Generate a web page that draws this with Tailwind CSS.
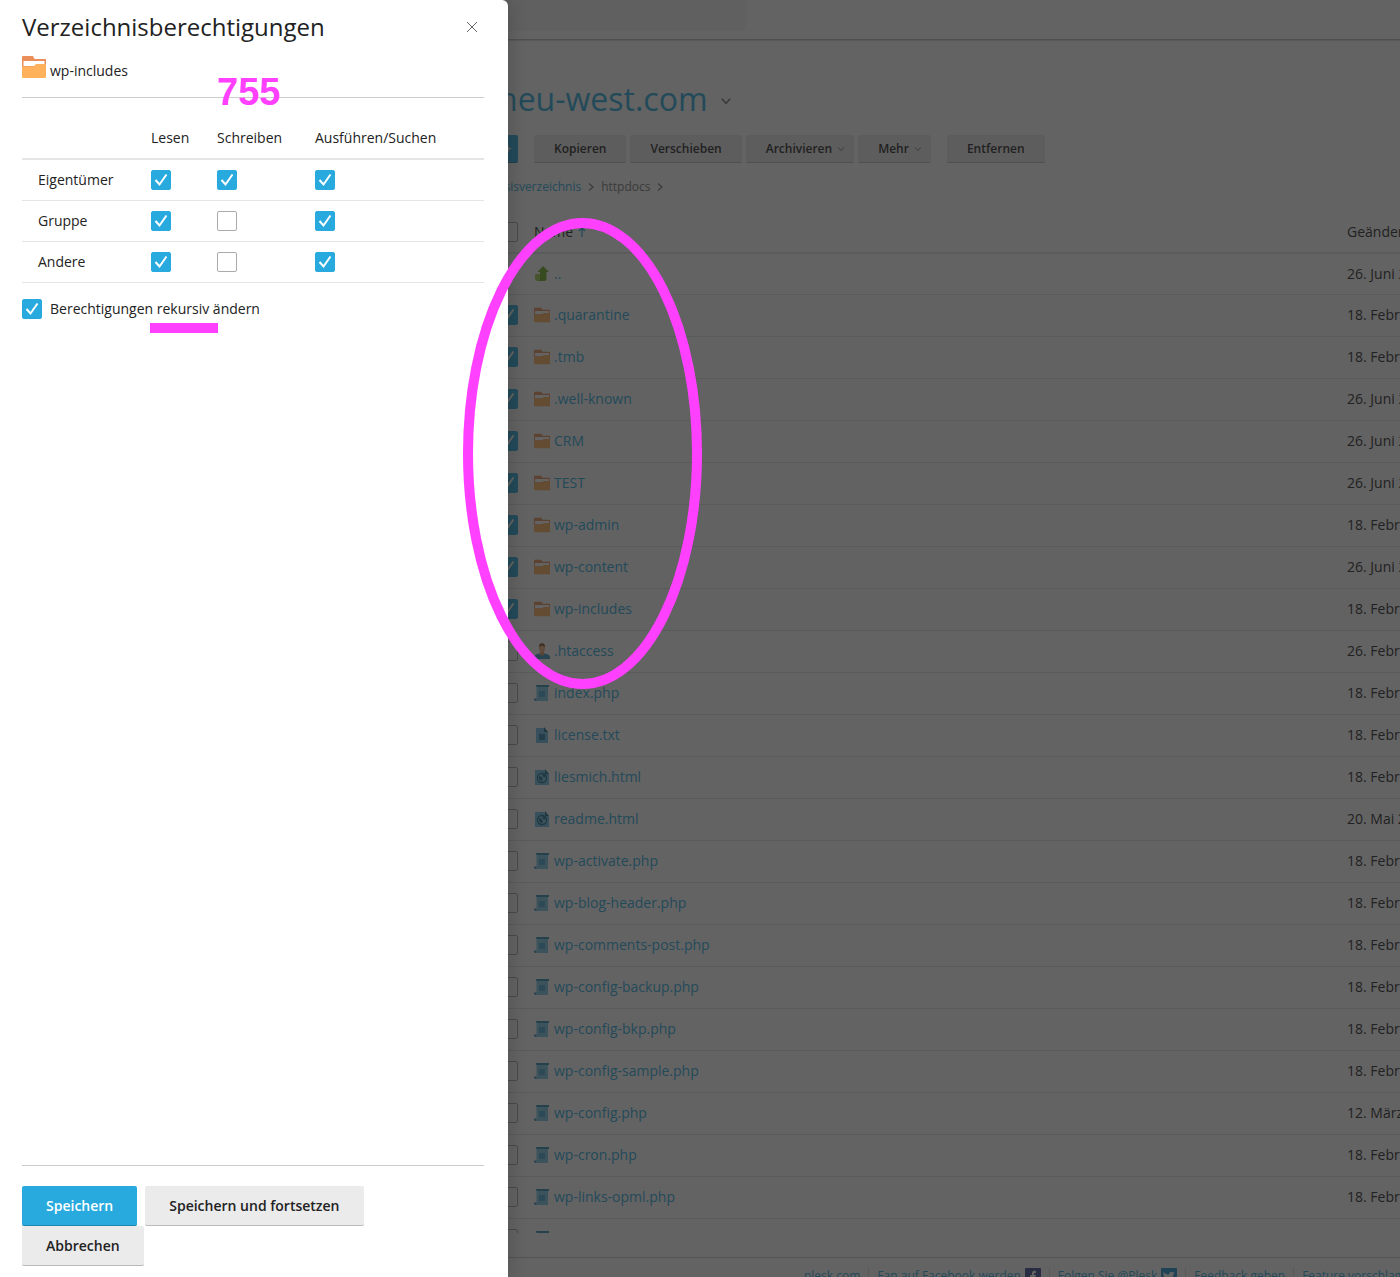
<!DOCTYPE html>
<html lang="de">
<head>
<meta charset="utf-8">
<meta name="viewport" content="width=device-width, initial-scale=1">
<title>Verzeichnisberechtigungen</title>
<script src="https://cdn.jsdelivr.net/npm/@tailwindcss/browser@4"></script>
</head>
<body class="relative h-screen overflow-hidden bg-white font-['Open_Sans',sans-serif] text-sm text-[#222]">

<svg class="hidden" aria-hidden="true">
  <symbol id="folder" viewBox="0 0 24 22">
    <path d="M1 0h10l1.500 3H24v9H0V1a1 1 0 0 1 1-1z" fill="#ea8f5a"/>
    <path d="M1.500 5h21v5h-21z" fill="#fff"/>
    <path d="M0 10.500h11.500l2.500-2.500h10v13a1 1 0 0 1-1 1H1a1 1 0 0 1-1-1z" fill="#ffb15c"/>
  </symbol>
  <symbol id="up" viewBox="0 0 16 16">
    <path d="M1 8h5v7H3a2 2 0 0 1-2-2z" fill="#9fd04c"/>
    <path d="M9 0l6 6h-2.500v6.500A2.500 2.500 0 0 1 10 15H3.500C5 15 6 14 6 12V6H3.500z" fill="#6fae1e"/>
  </symbol>
  <symbol id="user" viewBox="0 0 16 16">
    <path d="M0 16v-1.500C0 12 3 11 6 10.500h4c3 .5 6 1.500 6 4V16z" fill="#3a94c4"/>
    <path d="M6 8h4v3.500l-2 1.500-2-1.500z" fill="#d99a6c"/>
    <path d="M5 3c0-4 6-4 6 0v3c0 4-6 4-6 0z" fill="#f0b384"/>
    <path d="M5 4c-.5-5 6.500-5 6 0-1-1.500-5-1.500-6 0z" fill="#8a5a3c"/>
  </symbol>
  <symbol id="script" viewBox="0 0 16 16">
    <path d="M2.500 2h11.500v14H2.500z" fill="#7cc8e8"/>
    <path d="M2 0h13v2H3C2.500 2 2 1.500 2 0zM0 13.500h2.500V16H1.500C.5 16 0 15 0 13.500z" fill="#2f8cb3"/>
    <path d="M5 6h6v6H5z" fill="#4ba9d0"/>
  </symbol>
  <symbol id="text" viewBox="0 0 16 16">
    <path d="M2 1h8l4 4v11H2z" fill="#6cc0e4"/>
    <path d="M10 0l4 5h-4z" fill="#1f6f92"/>
    <path d="M5 7h6v6H5z" fill="#2784ad"/>
  </symbol>
  <symbol id="html" viewBox="0 0 16 16">
    <path d="M1 1h10l4 4v11H1z" fill="#6cc0e4"/>
    <path d="M11 0l4 5h-4z" fill="#1f6f92"/>
    <circle cx="8" cy="9" r="4.500" fill="#8ad0ee" stroke="#1f6f92" stroke-width="1.400"/>
    <path d="M5 7l3 1 1 3-2 1-2-2zM8 5l3 1v3l-2-1z" fill="#1f6f92"/>
  </symbol>
  <symbol id="check" viewBox="0 0 20 20">
    <path d="M4.500 10l4 4.500L15.500 4.500" fill="none" stroke="#fff" stroke-width="2"/>
  </symbol>
  <symbol id="chevron" viewBox="0 0 10 10">
    <path d="M1.500 3L5 7l3.500-4" fill="none" stroke="currentColor" stroke-width="1.200"/>
  </symbol>
</svg>

<div class="flex h-full flex-col">
  <header class="h-10 shrink-0 border-b border-[#bbb] shadow-[0_1px_1px_#ddd]">
    <div class="h-[31px] w-[746px] rounded-br bg-[#f5f5f5]"></div>
  </header>

  <main class="flex min-h-0 flex-1 flex-col pl-[498px]">
    <div class="mt-[35px] flex h-12 items-center gap-3">
      <h1 class="text-[32px] leading-12 text-[#28aade]">neu-west.com</h1>
      <svg class="mt-1 size-3 text-[#666]"><use href="#chevron"/></svg>
    </div>

    <div class="mt-3 flex gap-1 text-xs font-semibold">
      <button class="mr-3 h-7 w-5 rounded-r-xs border-b border-[#1c86b3] bg-[#28aade] text-white">+</button>
      <button class="h-7 rounded-xs border-b border-[#bbb] bg-[#ebebeb] px-5">Kopieren</button>
      <button class="h-7 rounded-xs border-b border-[#bbb] bg-[#ebebeb] px-5">Verschieben</button>
      <button class="flex h-7 items-center gap-[5px] rounded-xs border-b border-[#bbb] bg-[#ebebeb] pr-[9px] pl-5">Archivieren <svg class="size-2 text-[#777]"><use href="#chevron"/></svg></button>
      <button class="mr-3 flex h-7 items-center gap-[5px] rounded-xs border-b border-[#bbb] bg-[#ebebeb] pr-[9px] pl-5">Mehr <svg class="size-2 text-[#777]"><use href="#chevron"/></svg></button>
      <button class="h-7 rounded-xs border-b border-[#bbb] bg-[#ebebeb] px-5">Entfernen</button>
    </div>

    <nav class="mt-4 -ml-2 flex h-4 items-center gap-[5px] text-xs text-[#777]">
      <a href="#" class="text-[#28aade]">Basisverzeichnis</a>
      <svg class="size-2.5 -rotate-90"><use href="#chevron"/></svg>
      <span>httpdocs</span>
      <svg class="size-2.5 -rotate-90"><use href="#chevron"/></svg>
    </nav>

    <div class="mt-4 min-h-0 flex-1 overflow-hidden">
      <table class="w-full table-fixed border-collapse text-left">
        <colgroup><col class="w-9"><col><col class="w-[53px]"></colgroup>
        <thead>
          <tr class="h-[42px] border-b-2 border-[#e5e5e5]">
            <th><input type="checkbox" aria-label="Alle auswählen" class="block size-5 appearance-none rounded-xs border border-[#aaa]"></th>
            <th class="font-normal"><button class="flex items-center gap-1">Name <svg class="size-2.5" viewBox="0 0 10 10"><path d="M5 10V1M2 4l3-3 3 3" fill="none" stroke="#28aade" stroke-width="1.300"/></svg></button></th>
            <th class="overflow-hidden font-normal whitespace-nowrap">Geändert</th>
          </tr>
        </thead>
        <tbody id="files"></tbody>
      </table>
    </div>
  </main>

  <footer class="mt-6 flex h-5 shrink-0 gap-2 overflow-hidden border-t border-[#ccc] pt-2.5 pl-[804px] text-xs leading-4 whitespace-nowrap text-[#28aade]">
    <a href="#">plesk.com</a>
    <span class="w-px shrink-0 bg-[#ddd]"></span>
    <a href="#" class="flex gap-1">Fan auf Facebook werden <svg class="size-4" viewBox="0 0 16 16"><rect width="16" height="16" rx="1" fill="#3b4a98"/><path d="M7 16V9H5V7h2V5.500C7 3.500 8 2.500 11 3v2C9.500 5 9 5 9 6v1h2l-.5 2H9v7z" fill="#fff"/></svg></a>
    <span class="w-px shrink-0 bg-[#ddd]"></span>
    <a href="#" class="flex gap-1">Folgen Sie @Plesk <svg class="size-4" viewBox="0 0 16 16"><rect width="16" height="16" rx="1" fill="#1c8fd0"/><path d="M2.500 4c2 2 3.500 2.500 5.500 2.500 0-3 3-3.500 4-2l2-.5-1.500 2c0 5-5 8-10 5.500 1.500 0 2.500-.5 3-1-2-.5-3-2-3-3z" fill="#fff"/></svg></a>
    <span class="w-px shrink-0 bg-[#ddd]"></span>
    <a href="#">Feedback geben</a>
    <span class="w-px shrink-0 bg-[#ddd]"></span>
    <a href="#">Feature vorschlagen</a>
  </footer>
</div>

<div class="absolute inset-0 bg-[#212121]/70"></div>

<section role="dialog" aria-labelledby="dlg-title" class="absolute inset-y-0 left-0 flex w-[508px] max-w-full flex-col rounded-tr-md bg-white pr-6 pl-[22px] shadow-[0_0_20px_#0003]">
  <div class="flex h-[54px] items-center justify-between pr-1.5">
    <h2 id="dlg-title" class="text-2xl">Verzeichnisberechtigungen</h2>
    <button aria-label="Schließen"><svg class="size-3" viewBox="0 0 12 12"><path d="M1 1l10 10M11 1L1 11" stroke="#666" stroke-width="1"/></svg></button>
  </div>
  <div class="flex h-11 gap-1 border-b border-[#ccc]">
    <svg class="mt-0.5 h-[22px] w-6"><use href="#folder"/></svg>
    <span class="mt-[7px]">wp-includes</span>
  </div>

  <table class="mt-5 w-full table-fixed border-collapse text-left">
    <colgroup><col class="w-[129px]"><col class="w-[66px]"><col class="w-[98px]"><col></colgroup>
    <thead>
      <tr class="h-[41px] border-b-2 border-[#e5e5e5]">
        <td></td>
        <th class="font-normal">Lesen</th>
        <th class="font-normal">Schreiben</th>
        <th class="font-normal">Ausführen/Suchen</th>
      </tr>
    </thead>
    <tbody id="perms"></tbody>
  </table>

  <label class="mt-4 flex items-center gap-2" id="recursive"></label>

  <div class="mt-auto flex flex-wrap gap-x-2 border-t border-[#ccc] pt-5 pb-[11px] font-semibold">
    <button class="h-10 rounded-xs border-b border-[#1c86b3] bg-[#28aade] px-6 text-white">Speichern</button>
    <button class="h-10 rounded-xs border-b border-[#bbb] bg-[#ebebeb] px-6">Speichern und fortsetzen</button>
    <button class="h-10 rounded-xs border-b border-[#bbb] bg-[#ebebeb] px-6">Abbrechen</button>
  </div>
</section>

<!-- Annotations drawn over the page -->
<svg class="pointer-events-none absolute top-[218px] left-[463px] h-[471px] w-[239px]" viewBox="0 0 239 471"><ellipse cx="119.500" cy="235.500" rx="114.500" ry="230.500" fill="none" stroke="#ff40ff" stroke-width="10"/></svg>
<strong class="absolute top-[70px] left-[217px] font-['Liberation_Sans',sans-serif] text-[38px] leading-11 text-[#ff40ff]">755</strong>
<div class="absolute top-[323px] left-[150px] h-2.5 w-[68px] bg-[#ff40ff]"></div>

<script>
const checkbox = (on, label) => `<span class="grid size-5"><input type="checkbox" aria-label="${label}" ${on ? 'checked' : ''} class="col-start-1 row-start-1 size-5 appearance-none rounded-xs border border-[#aaa] bg-white checked:border-[#28aade] checked:bg-[#28aade]">${on ? '<svg class="pointer-events-none col-start-1 row-start-1 size-5"><use href="#check"/></svg>' : ''}</span>`;

const feb = '18. Februar 2020', juni = '26. Juni 2020';
const files = [
  ['up', '..', juni],
  ['folder', '.quarantine', feb, 1], ['folder', '.tmb', feb, 1], ['folder', '.well-known', juni, 1],
  ['folder', 'CRM', juni, 1], ['folder', 'TEST', juni, 1], ['folder', 'wp-admin', feb, 1],
  ['folder', 'wp-content', juni, 1], ['folder', 'wp-includes', feb, 1],
  ['user', '.htaccess', '26. Februar 2020'], ['script', 'index.php', feb], ['text', 'license.txt', feb],
  ['html', 'liesmich.html', feb], ['html', 'readme.html', '20. Mai 2020'],
  ['script', 'wp-activate.php', feb], ['script', 'wp-blog-header.php', feb], ['script', 'wp-comments-post.php', feb],
  ['script', 'wp-config-backup.php', feb], ['script', 'wp-config-bkp.php', feb], ['script', 'wp-config-sample.php', feb],
  ['script', 'wp-config.php', '12. März 2020'], ['script', 'wp-cron.php', feb], ['script', 'wp-links-opml.php', feb],
  ['script', 'wp-load.php', feb],
];
document.getElementById('files').innerHTML = files.map(([icon, name, date, on]) => `
  <tr class="${icon === 'up' ? 'h-[41px]' : 'h-[42px]'} border-b border-[#e0e0e0] ${on ? 'bg-[#fafafa]' : ''}">
    <td>${icon === 'up' ? '' : checkbox(on, name)}</td>
    <td><a href="#" class="flex items-center gap-1 text-[#28aade]"><svg class="size-4"><use href="#${icon}"/></svg>${name}</a></td>
    <td class="overflow-hidden whitespace-nowrap">${date}</td>
  </tr>`).join('');

document.getElementById('perms').innerHTML = [['Eigentümer', 1, 1, 1], ['Gruppe', 1, 0, 1], ['Andere', 1, 0, 1]].map(([who, ...bits]) => `
  <tr class="h-[41px] border-b border-[#e5e5e5]">
    <th class="pl-4 font-normal">${who}</th>
    ${bits.map((b, i) => `<td>${checkbox(b, who + ' ' + ['Lesen', 'Schreiben', 'Ausführen/Suchen'][i])}</td>`).join('')}
  </tr>`).join('');

document.getElementById('recursive').innerHTML = checkbox(1, 'Berechtigungen rekursiv ändern') + '<span>Berechtigungen rekursiv ändern</span>';
</script>
</body>
</html>
